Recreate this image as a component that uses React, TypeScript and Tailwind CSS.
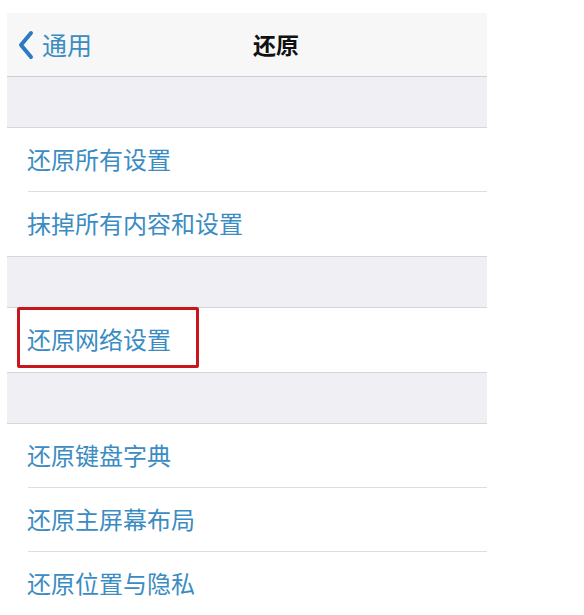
import React from "react";

const groups: string[][] = [
  ["还原所有设置", "抹掉所有内容和设置"],
  ["还原网络设置"],
  ["还原键盘字典", "还原主屏幕布局", "还原位置与隐私"],
];

const Row = ({ label, last }: { label: string; last: boolean }) => (
  <div className="h-[64px] pl-[21px] bg-white">
    <div
      className={`h-full flex items-center pb-[2px] ${
        last ? "" : "border-b border-[#dedde2]"
      }`}
    >
      <span className="-ml-[1px] text-[24px] leading-none text-[#3a8cc3]">
        {label}
      </span>
    </div>
  </div>
);

export default function App() {
  return (
    <div
      className="relative w-[584px] h-[615px] bg-white pt-[13px] pl-[7px] overflow-hidden"
      style={{ fontFamily: '"Noto Sans CJK SC", "Noto Sans", sans-serif' }}
    >
      <div className="w-[480px] bg-[#efeff4]">
        {/* nav bar */}
        <div className="h-[64px] bg-[#f7f7f8] border-b border-[#cfced3] flex items-center">
          <div className="w-[246px] flex items-center pl-[10px] gap-[8px]">
            <svg width="17" height="30" viewBox="0 0 17 30" fill="none">
              <path
                d="M14 3 L4 15 L14 27"
                stroke="#2a7bc0"
                strokeWidth="4"
                strokeLinecap="round"
                strokeLinejoin="round"
              />
            </svg>
            <span className="text-[25px] leading-none text-[#3a8cc3]">通用</span>
          </div>
          <span className="text-[23px] font-bold leading-none text-[#111]">还原</span>
        </div>

        {groups.map((g, gi) => (
          <div key={gi}>
            <div className="h-[50px]" />
            <div className="border-y border-[#d6d5da]">
              {g.map((label, i) => (
                <Row key={label} label={label} last={i === g.length - 1} />
              ))}
            </div>
          </div>
        ))}
      </div>

      {/* highlight box */}
      <div className="absolute left-[17px] top-[307px] w-[182px] h-[61px] border-[3px] border-[#c8161d] rounded-[2px]" />
    </div>
  );
}
